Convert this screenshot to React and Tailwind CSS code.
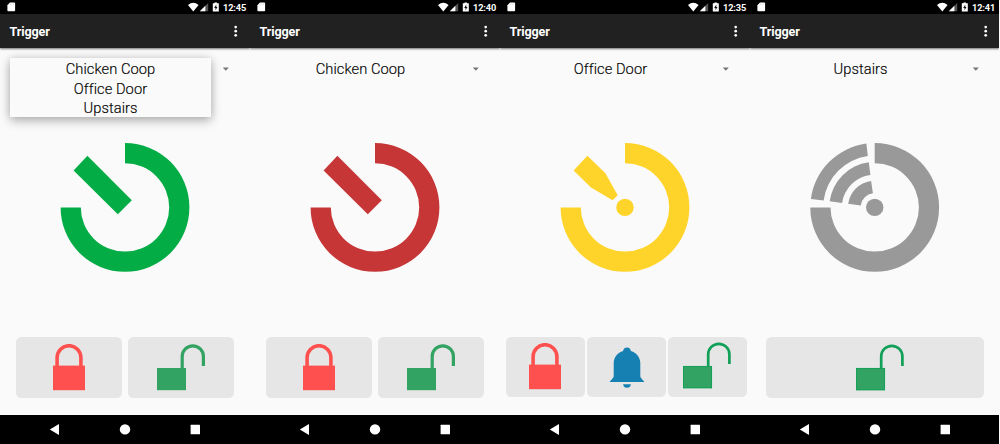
import React from 'react';

const RING = 'M125 1 A64.4 64.4 0 1 1 60.6 65.4 H80.8 A44.2 44.2 0 1 0 125 21.2 Z';

function StatusBar({ time }) {
  return (
    <div className="flex h-[14.4px] shrink-0 items-center justify-between bg-black pl-[7px] pr-[4.6px] text-white">
      <svg width="9" height="10" viewBox="0 0 9 10" className="block">
        <path d="M3 0.6H7.3Q8.1 0.6 8.1 1.4V8.5Q8.1 9.2 7.3 9.2H1.2Q0.4 9.2 0.4 8.5V3.3Z" fill="#fff" />
        <path d="M3.5 1.6V2.8M5 1.6V2.8M6.5 1.6V2.8" stroke="#bbb" strokeWidth="0.5" />
      </svg>
      <div className="flex items-center">
        <svg width="32" height="10" viewBox="0 0 32 10" className="block">
          <path d="M0 2.9Q5.3 -1.3 10.6 2.9L5.3 9.4Z" fill="#fff" />
          <path d="M20.2 0.9V9.3H11.8Z" fill="#555" />
          <path d="M17.4 3.7V9.3H11.8Z" fill="#fff" />
          <path d="M26.5 0.5H28.9V1.3H30.8V9.5H24.8V1.3H26.5Z" fill="#fff" />
          <path d="M28.3 2.6L26.2 5.9H27.5V8.2L29.5 5H28.3Z" fill="#111" />
        </svg>
        <span className="ml-[3.5px] w-[22.4px] whitespace-nowrap pt-[1px] text-[9.2px] font-bold leading-[14px] tracking-[-0.1px]">{time}</span>
      </div>
    </div>
  );
}

function AppBar({ last }) {
  return (
    <div className={`z-10 flex h-[33.8px] shrink-0 items-center justify-between bg-[#212121] pl-[9.4px] text-white shadow-[0_1px_2px_rgba(0,0,0,0.55)] ${last ? 'pr-[10.6px]' : 'pr-[11.7px]'}`}>
      <span className="pt-[2px] text-[12.6px] font-bold leading-4 tracking-[-0.1px]">Trigger</span>
      <svg width="4" height="12" viewBox="0 0 4 12" className="block">
        <circle cx="1.7" cy="2.1" r="1.35" fill="#fff" />
        <circle cx="1.7" cy="6.2" r="1.35" fill="#fff" />
        <circle cx="1.7" cy="10.3" r="1.35" fill="#fff" />
      </svg>
    </div>
  );
}

function Name({ children }) {
  return (
    <div className="h-[19.6px] whitespace-nowrap text-center text-[14.7px] font-light leading-[19.6px] tracking-[0.06px] text-black [-webkit-text-stroke:0.15px_#000]">
      {children}
    </div>
  );
}

function Spinner({ value, options }) {
  return (
    <div className="relative flex h-[94px] shrink-0 items-start pl-[10px] pt-[11.8px]">
      <div className="w-[201px]">
        <Name>{value}</Name>
      </div>
      <svg width="8" height="5" viewBox="0 0 8 5" className="ml-[11px] mt-[6.8px] block">
        <path d="M0.8 0.6H6.8L3.8 3.7Z" fill="#757575" />
      </svg>
      {options && (
        <div className="absolute left-[10px] top-[10px] h-[59px] w-[201px] bg-[#fafafa] pt-[1.8px] shadow-[0_4px_10px_rgba(0,0,0,0.26),0_0_8px_rgba(0,0,0,0.13)]">
          {options.map((o) => (
            <Name key={o}>{o}</Name>
          ))}
        </div>
      )}
    </div>
  );
}

function Dial({ kind, color }) {
  return (
    <svg width="250" height="132" viewBox="0 0 250 132" className="block shrink-0" fill={color}>
      <g transform={kind === 'wifi' ? 'translate(-0.3 0)' : undefined}>
        <path d={RING} />
        {kind === 'hand' && <path d="M87.4 13.8L131.8 58.2L117.8 72.2L73.6 28.4Z" />}
        {kind === 'needle' && (
          <path d="M87.4 13.8L105.4 31.3L117.7 53.2L112.6 58.2L91 45.5L73.6 28.4Z" />
        )}
        {kind !== 'hand' && <circle cx="125" cy="65.4" r="8.7" />}
        {kind === 'wifi' && (
          <>
            <path d="M61.2 56.9A64.4 64.4 0 0 1 116.7 1.6L118.1 14.1A51.8 51.8 0 0 0 73.9 58.5Z" />
            <path d="M80 59.3A45.3 45.3 0 0 1 119.1 20.3L120.7 32.9A32.9 32.9 0 0 0 92.4 61Z" />
            <path d="M98.5 61.7A26.8 26.8 0 0 1 121.4 38.9L123.2 51.3A14.2 14.2 0 0 0 111 63.4Z" />
          </>
        )}
      </g>
    </svg>
  );
}

function Lock() {
  return (
    <svg width="32" height="47" viewBox="0 0 32 47" className="block">
      <path d="M4.1 23V13.6A11.9 11.9 0 0 1 27.9 13.6V23" fill="none" stroke="#ff5050" strokeWidth="3.6" />
      <rect x="0" y="21.6" width="32" height="24.6" fill="#ff5050" />
    </svg>
  );
}

function Unlock({ thin }) {
  return (
    <svg width="48" height="47" viewBox="0 0 48 47" className="block">
      <rect x="0" y="24" width="29" height="22.2" fill="#33a363" />
      {thin && <rect x="0.4" y="24.4" width="28.2" height="21.4" fill="none" stroke="#12a058" strokeWidth="0.9" />}
      <path
        d="M25.2 25V12.4A10.6 10.6 0 0 1 46.4 12.4V22"
        fill="none"
        stroke={thin ? '#12a058' : '#33a363'}
        strokeWidth={thin ? 2.7 : 3.2}
      />
    </svg>
  );
}

function Bell() {
  return (
    <svg width="36" height="42" viewBox="0 0 36 42" className="block" fill="#1680b3">
      <path d="M18 0.5C20.4 0.5 21.7 2.1 21.9 4.1C27.5 5.8 31.1 10.4 31.3 16V29.5C31.5 31.3 34.5 33.2 35.4 35.1H0.6C1.5 33.2 4.5 31.3 4.7 29.5V16C4.9 10.4 8.5 5.8 14.1 4.1C14.3 2.1 15.6 0.5 18 0.5Z" />
      <path d="M14.1 37.3H21.9Q21.4 40.8 18 40.8Q14.6 40.8 14.1 37.3Z" />
    </svg>
  );
}

function Button({ label, children }) {
  return (
    <button aria-label={label} className="flex min-w-0 flex-1 items-start justify-center rounded-[5.5px] bg-[#e6e6e6]">
      {children}
    </button>
  );
}

function NavBar() {
  return (
    <div className="flex h-[29px] shrink-0 items-center bg-black">
      <svg width="250" height="29" viewBox="0 0 250 29" className="block shrink-0" fill="#fff">
        <path d="M59 8.9V20.1L49.8 14.5Z" />
        <circle cx="125" cy="14.4" r="5.2" />
        <rect x="190.6" y="9.7" width="9.4" height="9.5" rx="0.5" />
      </svg>
    </div>
  );
}

function Phone({ time, value, options, kind, color, last, children }) {
  return (
    <section className={`flex h-[444px] flex-col overflow-hidden bg-[#fafafa] ${last ? 'w-[249px]' : 'w-[250px]'}`}>
      <StatusBar time={time} />
      <AppBar last={last} />
      <Spinner value={value} options={options} />
      <Dial kind={kind} color={color} />
      <div className="min-h-0 flex-1">{children}</div>
      <NavBar />
    </section>
  );
}

export default function App() {
  return (
    <main className="flex h-[444px] w-[1000px] overflow-hidden bg-[#fafafa] font-['Roboto',sans-serif]">
      <Phone time="12:45" value="" options={['Chicken Coop', 'Office Door', 'Upstairs']} kind="hand" color="#04ac45">
        <div className="mt-[62.8px] flex h-[60.8px] gap-[6px] px-[16px]">
          <Button label="Lock"><div className="pt-[7px]"><Lock /></div></Button>
          <Button label="Unlock"><div className="pt-[7px]"><Unlock /></div></Button>
        </div>
      </Phone>
      <Phone time="12:40" value="Chicken Coop" kind="hand" color="#c63637">
        <div className="mt-[62.8px] flex h-[60.8px] gap-[6px] px-[16px]">
          <Button label="Lock"><div className="pt-[7px]"><Lock /></div></Button>
          <Button label="Unlock"><div className="pt-[7px]"><Unlock /></div></Button>
        </div>
      </Phone>
      <Phone time="12:35" value="Office Door" kind="needle" color="#ffd42a">
        <div className="mt-[62.6px] flex h-[60px] gap-[2.6px] pl-[6.4px] pr-[3.2px]">
          <Button label="Lock"><div className="pr-[1.6px] pt-[6px]"><Lock /></div></Button>
          <Button label="Ring"><div className="pt-[10px]"><Bell /></div></Button>
          <Button label="Unlock"><div className="pr-[1px] pt-[5.6px]"><Unlock thin /></div></Button>
        </div>
      </Phone>
      <Phone time="12:41" value="Upstairs" kind="wifi" color="#999999" last>
        <div className="mt-[62.8px] flex h-[60.8px] pl-[15.6px] pr-[15px]">
          <Button label="Unlock"><div className="pl-[10.6px] pt-[6.7px]"><Unlock thin /></div></Button>
        </div>
      </Phone>
    </main>
  );
}
